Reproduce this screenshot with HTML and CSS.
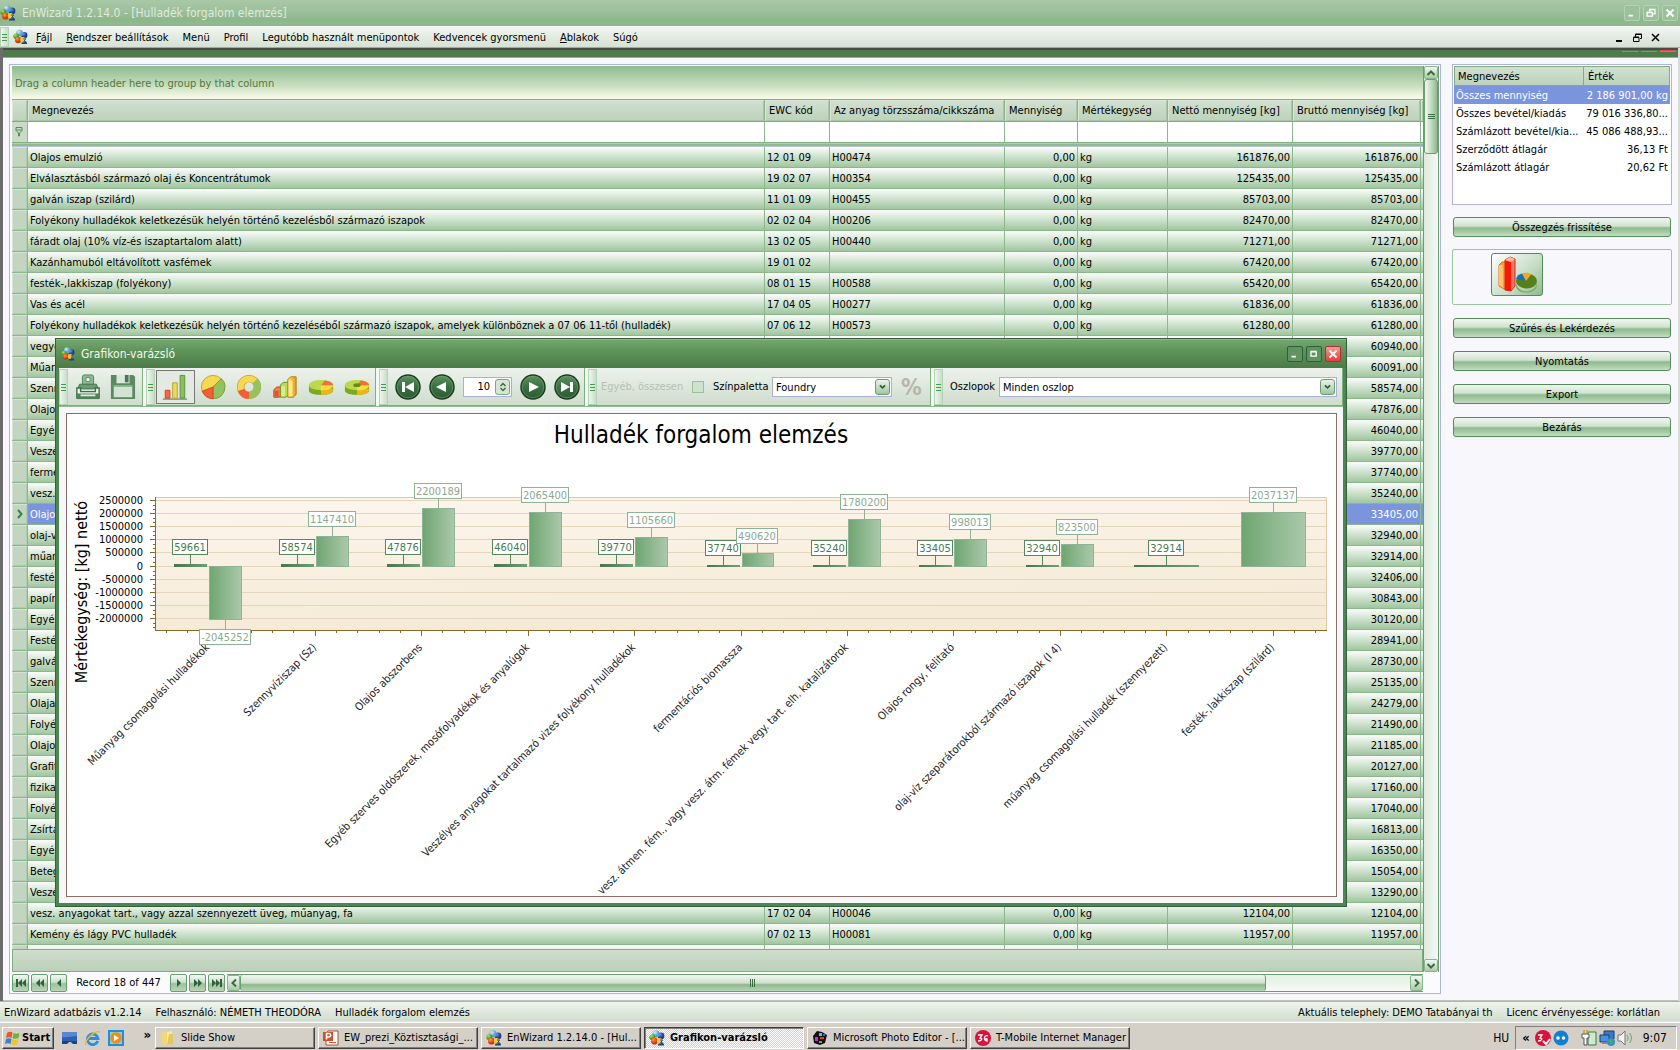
FILE: index.html
```html
<!DOCTYPE html>
<html lang="hu">
<head>
<meta charset="utf-8">
<title>EnWizard 1.2.14.0 - [Hulladék forgalom elemzés]</title>
<link rel="stylesheet" href="styles.css">
</head>
<body>
<svg class="defs" aria-hidden="true">
  <defs>
    <radialGradient id="gBlue" cx=".35" cy=".3"><stop offset="0" stop-color="#d6ecf8"/><stop offset="1" stop-color="#5b9fd0"/></radialGradient>
    <radialGradient id="gGreen" cx=".35" cy=".3"><stop offset="0" stop-color="#a6e06a"/><stop offset="1" stop-color="#4a9a1c"/></radialGradient>
    <radialGradient id="gRed" cx=".35" cy=".3"><stop offset="0" stop-color="#ff9a50"/><stop offset="1" stop-color="#d8350c"/></radialGradient>
    <radialGradient id="gNavy" cx=".35" cy=".3"><stop offset="0" stop-color="#6a94d8"/><stop offset="1" stop-color="#1c3c8c"/></radialGradient>
    <linearGradient id="gNav" x2="0" y2="1"><stop offset="0" stop-color="#5c9460"/><stop offset=".5" stop-color="#3a7040"/><stop offset="1" stop-color="#2c5a32"/></linearGradient>
    <linearGradient id="gGold" x2="1"><stop offset="0" stop-color="#f8e070"/><stop offset="1" stop-color="#e0a020"/></linearGradient>
  </defs>
  <symbol id="logo" viewBox="0 0 16 16">
    <circle cx="12" cy="6" r="3.400" fill="url(#gNavy)"/>
    <circle cx="7" cy="3.800" r="3.600" fill="url(#gBlue)"/>
    <circle cx="3.400" cy="7.200" r="3" fill="url(#gGreen)"/>
    <circle cx="5.500" cy="11.200" r="3.400" fill="url(#gRed)"/>
    <path d="M9 14.500c1-3 5-3 6 0v1H9z" fill="#1d3f8c"/>
    <circle cx="10.500" cy="10.800" r="2.800" fill="#f4cf2c"/>
    <path d="M11 10h2.500l-2 3h2.500" stroke="#2a4a90" fill="none"/>
  </symbol>
  <symbol id="navCircle" viewBox="0 0 26 26"><circle cx="13" cy="13" r="12" fill="url(#gNav)" stroke="#1c3d20" stroke-width="1.500"/><circle cx="13" cy="13" r="10.800" fill="none" stroke="#79a87c" stroke-opacity=".5"/></symbol>
</svg>

<header class="titlebar">
  <svg class="i16"><use href="#logo"/></svg>
  <h1>EnWizard 1.2.14.0 - [Hulladék forgalom elemzés]</h1>
  <div class="caption-btns">
    <button type="button" aria-label="Minimize"><svg viewBox="0 0 16 16"><path d="M4 10h5v2H4z" fill="#fff"/></svg></button>
    <button type="button" aria-label="Restore"><svg viewBox="0 0 16 16"><path d="M6.500 6V4h6v5h-2M3.500 7.500h6v4h-6zM3.500 7h6" stroke="#fff" stroke-width="1.500" fill="none"/></svg></button>
    <button type="button" aria-label="Close"><svg viewBox="0 0 16 16"><path d="M4 4l8 8M12 4l-8 8" stroke="#fff" stroke-width="2.200"/></svg></button>
  </div>
</header>

<nav class="menubar">
  <span class="grip"></span>
  <svg class="i16"><use href="#logo"/></svg>
  <ul>
    <li><a href="#"><u>F</u>ájl</a></li>
    <li><a href="#"><u>R</u>endszer beállítások</a></li>
    <li><a href="#">Menü</a></li>
    <li><a href="#">Profil</a></li>
    <li><a href="#">Legutóbb használt menüpontok</a></li>
    <li><a href="#">Kedvencek gyorsmenü</a></li>
    <li><a href="#"><u>A</u>blakok</a></li>
    <li><a href="#">Súgó</a></li>
  </ul>
  <div class="mdi-btns">
    <button type="button" aria-label="Minimize child"><svg viewBox="0 0 12 12"><path d="M2 8h6v2H2z"/></svg></button>
    <button type="button" aria-label="Restore child"><svg viewBox="0 0 12 12"><path d="M3.500 5V2h6v4.500H8M1.500 5.500h5.500v4H1.500zM1.500 5h5.500M3.500 2.500h6" stroke="#000" fill="none"/></svg></button>
    <button type="button" aria-label="Close child"><svg viewBox="0 0 12 12"><path d="M2 2l7 7M9 2l-7 7" stroke="#000" stroke-width="1.500"/></svg></button>
  </div>
</nav>

<main class="mdi">
  <div class="child-title"><i></i><i></i><i class="red"></i></div>
  <div class="child">
    <section class="grid">
      <div class="grid-main">
        <div class="grid-view">
          <div class="group-panel">Drag a column header here to group by that column</div>
          <div class="rows">
          <table>
            <colgroup><col class="c-ind"><col><col class="c-ewc"><col class="c-code"><col class="c-qty"><col class="c-unit"><col class="c-net"><col class="c-gross"><col class="c-end"></colgroup>
            <thead>
              <tr class="heads"><th></th><th>Megnevezés</th><th>EWC kód</th><th>Az anyag törzsszáma/cikkszáma</th><th>Mennyiség</th><th>Mértékegység</th><th>Nettó mennyiség [kg]</th><th>Bruttó mennyiség [kg]</th><th></th></tr>
              <tr class="filter"><td><svg viewBox="0 0 8 10"><path d="M1 .5h6v3L4.500 6v3h-1V6L1 3.500zM1 3h6" fill="none" stroke="#4f8f58"/></svg></td><td><td><td><td><td><td><td><td></tr>
              <tr class="sep"><td colspan="9"></td></tr>
            </thead>
            <tbody>
              <tr><td><td>Olajos emulzió<td>12 01 09<td>H00474<td>0,00<td>kg<td>161876,00<td>161876,00<td>
              <tr><td><td>Elválasztásból származó olaj és Koncentrátumok<td>19 02 07<td>H00354<td>0,00<td>kg<td>125435,00<td>125435,00<td>
              <tr><td><td>galván iszap (szilárd)<td>11 01 09<td>H00455<td>0,00<td>kg<td>85703,00<td>85703,00<td>
              <tr><td><td>Folyékony hulladékok keletkezésük helyén történő kezelésből származó iszapok<td>02 02 04<td>H00206<td>0,00<td>kg<td>82470,00<td>82470,00<td>
              <tr><td><td>fáradt olaj (10% víz-és iszaptartalom alatt)<td>13 02 05<td>H00440<td>0,00<td>kg<td>71271,00<td>71271,00<td>
              <tr><td><td>Kazánhamuból eltávolított vasfémek<td>19 01 02<td><td>0,00<td>kg<td>67420,00<td>67420,00<td>
              <tr><td><td>festék-,lakkiszap (folyékony)<td>08 01 15<td>H00588<td>0,00<td>kg<td>65420,00<td>65420,00<td>
              <tr><td><td>Vas és acél<td>17 04 05<td>H00277<td>0,00<td>kg<td>61836,00<td>61836,00<td>
              <tr><td><td>Folyékony hulladékok keletkezésük helyén történő kezeléséből származó iszapok, amelyek különböznek a 07 06 11-től (hulladék)<td>07 06 12<td>H00573<td>0,00<td>kg<td>61280,00<td>61280,00<td>
              <tr><td><td>vegyes<td><td><td>0,00<td>kg<td>60940,00<td>60940,00<td>
              <tr><td><td>Műanyag<td><td><td>0,00<td>kg<td>60091,00<td>60091,00<td>
              <tr><td><td>Szennyvíz<td><td><td>0,00<td>kg<td>58574,00<td>58574,00<td>
              <tr><td><td>Olajos<td><td><td>0,00<td>kg<td>47876,00<td>47876,00<td>
              <tr><td><td>Egyéb<td><td><td>0,00<td>kg<td>46040,00<td>46040,00<td>
              <tr><td><td>Veszélyes<td><td><td>0,00<td>kg<td>39770,00<td>39770,00<td>
              <tr><td><td>fermentációs<td><td><td>0,00<td>kg<td>37740,00<td>37740,00<td>
              <tr><td><td>vesz. átmen.<td><td><td>0,00<td>kg<td>35240,00<td>35240,00<td>
              <tr class="sel"><td><svg viewBox="0 0 8 10"><path d="M2 1l3.500 4L2 9" fill="none" stroke="#3f7f48" stroke-width="2"/></svg><td>Olajos<td><td><td>0,00<td>kg<td>33405,00<td>33405,00<td>
              <tr><td><td>olaj-víz<td><td><td>0,00<td>kg<td>32940,00<td>32940,00<td>
              <tr><td><td>műanyag<td><td><td>0,00<td>kg<td>32914,00<td>32914,00<td>
              <tr><td><td>festék<td><td><td>0,00<td>kg<td>32406,00<td>32406,00<td>
              <tr><td><td>papír<td><td><td>0,00<td>kg<td>30843,00<td>30843,00<td>
              <tr><td><td>Egyéb<td><td><td>0,00<td>kg<td>30120,00<td>30120,00<td>
              <tr><td><td>Festék<td><td><td>0,00<td>kg<td>28941,00<td>28941,00<td>
              <tr><td><td>galván<td><td><td>0,00<td>kg<td>28730,00<td>28730,00<td>
              <tr><td><td>Szennyvíz<td><td><td>0,00<td>kg<td>25135,00<td>25135,00<td>
              <tr><td><td>Olajat<td><td><td>0,00<td>kg<td>24279,00<td>24279,00<td>
              <tr><td><td>Folyékony<td><td><td>0,00<td>kg<td>21490,00<td>21490,00<td>
              <tr><td><td>Olajos<td><td><td>0,00<td>kg<td>21185,00<td>21185,00<td>
              <tr><td><td>Grafit<td><td><td>0,00<td>kg<td>20127,00<td>20127,00<td>
              <tr><td><td>fizikai<td><td><td>0,00<td>kg<td>17160,00<td>17160,00<td>
              <tr><td><td>Folyékony<td><td><td>0,00<td>kg<td>17040,00<td>17040,00<td>
              <tr><td><td>Zsírtalanító<td><td><td>0,00<td>kg<td>16813,00<td>16813,00<td>
              <tr><td><td>Egyéb<td><td><td>0,00<td>kg<td>16350,00<td>16350,00<td>
              <tr><td><td>Betegek<td><td><td>0,00<td>kg<td>15054,00<td>15054,00<td>
              <tr><td><td>Veszélyes<td><td><td>0,00<td>kg<td>13290,00<td>13290,00<td>
              <tr><td><td>vesz. anyagokat tart., vagy azzal szennyezett üveg, műanyag, fa<td>17 02 04<td>H00046<td>0,00<td>kg<td>12104,00<td>12104,00<td>
              <tr><td><td>Kemény és lágy PVC hulladék<td>07 02 13<td>H00081<td>0,00<td>kg<td>11957,00<td>11957,00<td>
              <tr><td><td><td><td><td><td><td><td><td>
            </tbody>
          </table>
          </div>
          <div class="grid-foot"></div>
        </div>
        <div class="vscroll">
          <button type="button" aria-label="Up"><svg viewBox="0 0 10 8"><path d="M1.500 6L5 2.500 8.500 6" fill="none" stroke="#3c6b40" stroke-width="2"/></svg></button>
          <div class="vthumb"><svg viewBox="0 0 7 6"><path d="M0 .5h7M0 2.500h7M0 4.500h7" stroke="#3c6b40"/></svg></div>
          <div class="vtrack"></div>
          <button type="button" aria-label="Down"><svg viewBox="0 0 10 8"><path d="M1.500 2L5 5.500 8.500 2" fill="none" stroke="#3c6b40" stroke-width="2"/></svg></button>
        </div>
      </div>
      <div class="navrow">
        <button type="button" aria-label="First"><svg viewBox="0 0 12 10"><path d="M1 1h2v8H1zM7 1v8L3 5zM11 1v8L7 5z"/></svg></button>
        <button type="button" aria-label="Previous page"><svg viewBox="0 0 12 10"><path d="M6 1v8L2 5zM10 1v8L6 5z"/></svg></button>
        <button type="button" aria-label="Previous"><svg viewBox="0 0 12 10"><path d="M8 1v8L4 5z"/></svg></button>
        <span class="rec">Record 18 of 447</span>
        <button type="button" aria-label="Next"><svg viewBox="0 0 12 10"><path d="M4 1v8l4-4z"/></svg></button>
        <button type="button" aria-label="Next page"><svg viewBox="0 0 12 10"><path d="M2 1v8l4-4zM6 1v8l4-4z"/></svg></button>
        <button type="button" aria-label="Last"><svg viewBox="0 0 12 10"><path d="M1 1v8l4-4zM5 1v8l4-4zM9 1h2v8H9z"/></svg></button>
        <div class="hscroll">
          <button type="button" aria-label="Left"><svg viewBox="0 0 8 10"><path d="M6 1.500L2.500 5 6 8.500" fill="none" stroke="#3c6b40" stroke-width="2"/></svg></button>
          <div class="hthumb"><svg viewBox="0 0 6 8"><path d="M.5 0v8M2.500 0v8M4.500 0v8" stroke="#3c6b40"/></svg></div>
          <div class="htrack"></div>
          <button type="button" aria-label="Right"><svg viewBox="0 0 8 10"><path d="M2 1.500L5.500 5 2 8.500" fill="none" stroke="#3c6b40" stroke-width="2"/></svg></button>
        </div>
      </div>
    </section>

    <aside class="side">
      <div class="sumbox">
        <table>
          <thead><tr><th>Megnevezés</th><th>Érték</th></tr></thead>
          <tbody>
            <tr class="on"><td>Összes mennyiség</td><td>2 186 901,00 kg</td></tr>
            <tr><td>Összes bevétel/kiadás</td><td>79 016 336,80...</td></tr>
            <tr><td>Számlázott bevétel/kia...</td><td>45 086 488,93...</td></tr>
            <tr><td>Szerződött átlagár</td><td>36,13 Ft</td></tr>
            <tr><td>Számlázott átlagár</td><td>20,62 Ft</td></tr>
          </tbody>
        </table>
      </div>
      <button type="button" class="gbtn">Összegzés frissítése</button>
      <div class="chartbox">
        <button type="button" aria-label="Grafikon">
          <svg viewBox="0 0 42 37">
            <path d="M3 9l3-3h6v24l-4 3-5-3z" fill="#ff9a30" stroke="#e07010"/><path d="M3 9h4v23l-4-3z" fill="#ffc070"/>
            <path d="M9 4l5-3 5 2v27l-4 5-6-1z" fill="#ff7860" stroke="#c83018"/><path d="M9 4l6 2v29l-6-1z" fill="#f81808"/><path d="M9 4l5-3 5 2-4 3z" fill="#ffb8a0"/>
            <path d="M20 25c0 14 21 14 21 0v4c0 10-21 10-21 1z" fill="#7fa860"/>
            <ellipse cx="30.500" cy="25" rx="10.500" ry="7.500" fill="#56801c"/>
            <path d="M30 25l-10-2c1-3 3-5 6-5.500z" fill="#1672b0"/><path d="M30 25l-4-7.500c3-1 7-1 9 1z" fill="#f0a828"/>
          </svg>
        </button>
      </div>
      <div class="gstack">
        <button type="button" class="gbtn">Szűrés és Lekérdezés</button>
        <button type="button" class="gbtn">Nyomtatás</button>
        <button type="button" class="gbtn">Export</button>
        <button type="button" class="gbtn">Bezárás</button>
      </div>
    </aside>
  </div>
</main>

<section class="dialog" role="dialog" aria-label="Grafikon-varázsló">
  <div class="dlg-title">
    <svg class="i16"><use href="#logo"/></svg>
    <h2>Grafikon-varázsló</h2>
    <div class="caption-btns dlg-btns">
      <button type="button" aria-label="Minimize"><svg viewBox="0 0 16 16"><path d="M4 10h5v2H4z" fill="#fff"/></svg></button>
      <button type="button" aria-label="Maximize"><svg viewBox="0 0 16 16"><path d="M4.500 5.500h6v5h-6zM4 5h7" stroke="#fff" stroke-width="1.500" fill="none"/></svg></button>
      <button type="button" aria-label="Close" class="close"><svg viewBox="0 0 16 16"><path d="M4 4l8 8M12 4l-8 8" stroke="#fff" stroke-width="2.200"/></svg></button>
    </div>
  </div>
  <div class="dlg-body">
  <div class="toolbar">
    <div class="bar b1"><span class="grip"></span>
      <button type="button" aria-label="Nyomtatás"><svg viewBox="0 0 28 28">
        <rect x="8" y="1" width="12" height="14" rx="2" fill="#8fb894" stroke="#4f8258"/><circle cx="14" cy="6" r="2.500" fill="#e8f0e8" stroke="#4f8258"/>
        <path d="M5 11h18l2 5H3z" fill="#6a9a70" stroke="#3f6f48"/><path d="M2 15h4v4h16v-4h4v11H2z" fill="#f2f7f2" stroke="#3f6f48" stroke-width="1.500"/><path d="M2 21h24v6H2z" fill="#4f8258"/><path d="M6 23h16" stroke="#dfeadf" stroke-width="2"/></svg></button>
      <button type="button" aria-label="Mentés"><svg viewBox="0 0 28 28">
        <path d="M1 1h24l2 2v24H1z" fill="#5a8a60"/><path d="M7 1h14v9H7z" fill="#dce8dc"/><path d="M16 1h4v8h-4z" fill="#4a7850"/><path d="M4 13h20v12H4z" fill="#d3e2d3"/><path d="M4 13h20" stroke="#8fb894" stroke-width="2"/></svg></button>
    </div>
    <div class="bar b2"><span class="grip"></span>
      <button type="button" class="on" aria-label="Oszlop"><svg viewBox="0 0 28 28"><path d="M1 27h26" stroke="#555"/><path d="M3.500 17.500h5V26h-5z" fill="#f06a40" stroke="#d04020"/><path d="M11.500 9.500h5V26h-5z" fill="#ecd95c" stroke="#b8a030"/><path d="M19.500 1.500h5V26h-5z" fill="#8cbf5c" stroke="#5a9040"/></svg></button>
      <button type="button" aria-label="Kör"><svg viewBox="0 0 28 28"><circle cx="14" cy="14" r="12.500" fill="#f4da52" stroke="#d0982c"/><path d="M14 14l9-9a12.500 12.500 0 0 1-9 21.500z" fill="#94c25c" stroke="#6fa040"/><path d="M14 14v12.500A12.500 12.500 0 0 1 2.500 18.500z" fill="#f06038" stroke="#d04828"/></svg></button>
      <button type="button" aria-label="Gyűrű"><svg viewBox="0 0 28 28"><circle cx="14" cy="14" r="9" fill="none" stroke="#d0982c" stroke-width="8"/><circle cx="14" cy="14" r="9" fill="none" stroke="#f4da52" stroke-width="6.500"/><path d="M20.400 7.600A9 9 0 0 1 14 23" fill="none" stroke="#94c25c" stroke-width="7.500"/><path d="M14 23a9 9 0 0 1-8.500-6" fill="none" stroke="#f06038" stroke-width="7.500"/></svg></button>
      <button type="button" aria-label="3D oszlop"><svg viewBox="0 0 28 28"><path d="M2 17l3-3h6v8l-3 3H2z" fill="#f08050" stroke="#b84018"/><path d="M9 12l3-3h6v13l-3 3H9z" fill="#b8dc50" stroke="#689020"/><path d="M17 6l3-3h6v19l-3 3h-6z" fill="url(#gGold)" stroke="#b07810"/><path d="M3 18h4v6H3z" fill="#e85028"/><path d="M10 13h4v11h-4z" fill="#d8ec90"/><path d="M18 7h4v17h-4z" fill="#fbe890"/></svg></button>
      <button type="button" aria-label="3D kör"><svg viewBox="0 0 28 28"><path d="M1 12v6c0 6 26 6 26 0v-6z" fill="#7fa81c"/><path d="M14 16h13v2c0 3-7 4.500-13 4.500z" fill="#e8b818"/><ellipse cx="14" cy="12" rx="13" ry="5.500" fill="#bcd84c"/><path d="M14 12h13c0 4-7 5.500-13 5.500z" fill="#f8dc40"/><path d="M14 12l4-5c5 .5 9 2.500 9 5z" fill="#f07038"/></svg></button>
      <button type="button" aria-label="3D gyűrű"><svg viewBox="0 0 28 28"><path d="M1 12v6c0 6 26 6 26 0v-6z" fill="#7fa81c"/><path d="M14 16h13v2c0 3-7 4.500-13 4.500z" fill="#e8b818"/><ellipse cx="14" cy="12" rx="13" ry="5.500" fill="#bcd84c"/><path d="M14 12h13c0 4-7 5.500-13 5.500z" fill="#f8dc40"/><path d="M14 12l4-5c5 .5 9 2.500 9 5z" fill="#f07038"/><ellipse cx="14" cy="12" rx="4" ry="2" fill="#6a8a1c"/></svg></button>
    </div>
    <div class="bar b3"><span class="grip"></span>
      <button type="button" aria-label="Első"><svg viewBox="0 0 26 26"><use href="#navCircle"/><path d="M7 8h3v10H7zM19 8v10l-9-5z" fill="#fff"/></svg></button>
      <button type="button" aria-label="Előző"><svg viewBox="0 0 26 26"><use href="#navCircle"/><path d="M17 8v10l-10-5z" fill="#fff"/></svg></button>
      <label class="spin"><input type="text" value="10" aria-label="Darab"><span><svg viewBox="0 0 8 10"><path d="M1.500 4L4 1.500 6.500 4M1.500 6L4 8.500 6.500 6" fill="none" stroke="#3c6b40" stroke-width="1.500"/></svg></span></label>
      <button type="button" aria-label="Következő"><svg viewBox="0 0 26 26"><use href="#navCircle"/><path d="M9 8v10l10-5z" fill="#fff"/></svg></button>
      <button type="button" aria-label="Utolsó"><svg viewBox="0 0 26 26"><use href="#navCircle"/><path d="M16 8h3v10h-3zM7 8v10l9-5z" fill="#fff"/></svg></button>
    </div>
    <div class="bar b4"><span class="grip"></span>
      <label class="dim" for="other">Egyéb, összesen</label><input type="checkbox" id="other" disabled>
      <label for="pal">Színpaletta</label>
      <span class="combo pal"><select id="pal"><option>Foundry</option></select><svg viewBox="0 0 15 16"><path d="M4.500 6L7.500 9l3-3" fill="none" stroke="#2f5f38" stroke-width="2"/></svg></span>
      <span class="pct">%</span>
    </div>
    <div class="bar b5"><span class="grip"></span>
      <label for="cols">Oszlopok</label>
      <span class="combo cols"><select id="cols"><option>Minden oszlop</option></select><svg viewBox="0 0 15 16"><path d="M4.500 6L7.500 9l3-3" fill="none" stroke="#2f5f38" stroke-width="2"/></svg></span>
    </div>
  </div>
  <div class="chart">
    <svg viewBox="67 414 1269 482" role="img" aria-label="Hulladék forgalom elemzés">
      <defs>
        <linearGradient id="plot" x2=".3" y2="1"><stop offset="0" stop-color="#fdf6ee"/><stop offset="1" stop-color="#f5ead6"/></linearGradient>
        <linearGradient id="lt" x2="1"><stop offset="0" stop-color="#6fa571"/><stop offset="1" stop-color="#abc9ab"/></linearGradient>
        <linearGradient id="dk" x2="1"><stop offset="0" stop-color="#4a7350"/><stop offset="1" stop-color="#6f9f74"/></linearGradient>
      </defs>
      <text class="ctitle" x="701" y="443">Hulladék forgalom elemzés</text>
      <text class="atitle" transform="translate(87 592) rotate(-90)">Mértékegység: [kg] nettó</text>
      <rect x="155" y="497" width="1172" height="133" fill="url(#plot)"/>
      <path class="gl" d="M155 500.500h1172M155 513.500h1172M155 526.500h1172M155 539.500h1172M155 552.500h1172M155 566.500h1172M155 579.500h1172M155 592.500h1172M155 605.500h1172M155 618.500h1172"/>
      <path d="M155 497.500H1326.500V630" fill="none" stroke="#dac9a6"/>
      <path class="ax" d="M155.500 497v134M155 630.500h1172M150 500.500h5M150 513.500h5M150 526.500h5M150 539.500h5M150 552.500h5M150 566.500h5M150 579.500h5M150 592.500h5M150 605.500h5M150 618.500h5"/>
      <path class="ax" d="M153 505.500h2M153 509.500h2M153 518.500h2M153 522.500h2M153 531.500h2M153 535.500h2M153 544.500h2M153 548.500h2M153 557.500h2M153 562.500h2M153 571.500h2M153 575.500h2M153 584.500h2M153 588.500h2M153 597.500h2M153 601.500h2M153 610.500h2M153 614.500h2M153 623.500h2M153 627.500h2"/>
      <path class="ax" d="M208.500 630v6M315.500 630v6M421.500 630v6M528.500 630v6M634.500 630v6M741.500 630v6M847.500 630v6M953.500 630v6M1060.500 630v6M1166.500 630v6M1273.500 630v6"/>
      <path class="ax" d="M166.500 630v3M187.500 630v3M229.500 630v3M251.500 630v3M272.500 630v3M293.500 630v3M336.500 630v3M357.500 630v3M379.500 630v3M400.500 630v3M442.500 630v3M464.500 630v3M485.500 630v3M506.500 630v3M549.500 630v3M570.500 630v3M592.500 630v3M613.500 630v3M655.500 630v3M677.500 630v3M698.500 630v3M719.500 630v3M762.500 630v3M783.500 630v3M804.500 630v3M826.500 630v3M868.500 630v3M890.500 630v3M911.500 630v3M932.500 630v3M975.500 630v3M996.500 630v3M1017.500 630v3M1039.500 630v3M1081.500 630v3M1103.500 630v3M1124.500 630v3M1145.500 630v3M1188.500 630v3M1209.500 630v3M1230.500 630v3M1252.500 630v3M1294.500 630v3M1315.500 630v3"/>
      <g class="yl"><text x="143" y="504">2500000</text><text x="143" y="517">2000000</text><text x="143" y="530">1500000</text><text x="143" y="543">1000000</text><text x="143" y="556">500000</text><text x="143" y="570">0</text><text x="143" y="583">-500000</text><text x="143" y="596">-1000000</text><text x="143" y="609">-1500000</text><text x="143" y="622">-2000000</text></g>
      <g fill="url(#dk)"><rect x="174" y="564" width="33" height="3"/><rect x="281" y="564" width="33" height="3"/><rect x="387" y="564" width="33" height="3"/><rect x="494" y="564" width="33" height="3"/><rect x="600" y="564" width="33" height="3"/><rect x="707" y="565" width="33" height="2"/><rect x="813" y="565" width="33" height="2"/><rect x="919" y="565" width="33" height="2"/><rect x="1026" y="565" width="33" height="2"/><rect x="1134" y="565" width="65" height="2"/></g>
      <g fill="url(#lt)" stroke="#8fb396"><rect x="209.500" y="566.500" width="32" height="53"/><rect x="316.500" y="536.500" width="32" height="30"/><rect x="422.500" y="508.500" width="32" height="58"/><rect x="529.500" y="512.500" width="32" height="54"/><rect x="635.500" y="537.500" width="32" height="29"/><rect x="742.500" y="553.500" width="31" height="13"/><rect x="848.500" y="519.500" width="32" height="47"/><rect x="954.500" y="539.500" width="32" height="27"/><rect x="1061.500" y="544.500" width="32" height="22"/><rect x="1241.500" y="512.500" width="64" height="54"/></g>
      <g class="xl">
        <text transform="translate(210 648) rotate(-45)">Műanyag csomagolási hulladékok</text>
        <text transform="translate(317 648) rotate(-45)">Szennyvíziszap (Sz)</text>
        <text transform="translate(423 648) rotate(-45)">Olajos abszorbens</text>
        <text transform="translate(530 648) rotate(-45)">Egyéb szerves oldószerek, mosófolyadékok és anyalúgok</text>
        <text transform="translate(636 648) rotate(-45)">Veszélyes anyagokat tartalmazó vizes folyékony hulladékok</text>
        <text transform="translate(743 648) rotate(-45)">fermentációs biomassza</text>
        <text transform="translate(849 648) rotate(-45)">vesz. átmen. fém., vagy vesz. átm. fémek vegy. tart. elh. katalizátorok</text>
        <text transform="translate(955 648) rotate(-45)">Olajos rongy, felitató</text>
        <text transform="translate(1062 648) rotate(-45)">olaj-víz szeparátorokból származó iszapok (I 4)</text>
        <text transform="translate(1168 648) rotate(-45)">műanyag csomagolási hulladék (szennyezett)</text>
        <text transform="translate(1275 648) rotate(-45)">festék-,lakkiszap (szilárd)</text>
      </g>
      <g class="vl d">
        <path d="M190.500 555v9M297.500 555v9M403.500 555v9M510.500 555v9M616.500 555v9M723.500 556v9M829.500 556v9M935.500 556v9M1042.500 556v9M1166.500 556v9"/>
        <rect x="172.500" y="539.500" width="35" height="15"/><text x="190" y="551">59661</text>
        <rect x="279.500" y="539.500" width="35" height="15"/><text x="297" y="551">58574</text>
        <rect x="385.500" y="539.500" width="35" height="15"/><text x="403" y="551">47876</text>
        <rect x="492.500" y="539.500" width="35" height="15"/><text x="510" y="551">46040</text>
        <rect x="598.500" y="539.500" width="35" height="15"/><text x="616" y="551">39770</text>
        <rect x="705.500" y="540.500" width="35" height="15"/><text x="723" y="552">37740</text>
        <rect x="811.500" y="540.500" width="35" height="15"/><text x="829" y="552">35240</text>
        <rect x="917.500" y="540.500" width="35" height="15"/><text x="935" y="552">33405</text>
        <rect x="1024.500" y="540.500" width="35" height="15"/><text x="1042" y="552">32940</text>
        <rect x="1148.500" y="540.500" width="35" height="15"/><text x="1166" y="552">32914</text>
      </g>
      <g class="vl l">
        <path d="M225.500 620v9M332.500 527v9M438.500 499v9M545.500 503v9M651.500 528v9M757.500 544v9M864.500 510v9M970.500 530v9M1077.500 535v9M1273.500 503v9"/>
        <rect x="199.500" y="629.500" width="51" height="15"/><text x="225" y="641">-2045252</text>
        <rect x="308.500" y="511.500" width="47" height="15"/><text x="332" y="523">1147410</text>
        <rect x="414.500" y="483.500" width="47" height="15"/><text x="438" y="495">2200189</text>
        <rect x="521.500" y="487.500" width="47" height="15"/><text x="545" y="499">2065400</text>
        <rect x="627.500" y="512.500" width="47" height="15"/><text x="651" y="524">1105660</text>
        <rect x="736.500" y="528.500" width="41" height="15"/><text x="757" y="540">490620</text>
        <rect x="840.500" y="494.500" width="47" height="15"/><text x="864" y="506">1780200</text>
        <rect x="949.500" y="514.500" width="41" height="15"/><text x="970" y="526">998013</text>
        <rect x="1056.500" y="519.500" width="41" height="15"/><text x="1077" y="531">823500</text>
        <rect x="1249.500" y="487.500" width="47" height="15"/><text x="1273" y="499">2037137</text>
      </g>
    </svg>
  </div>
  </div>
</section>

<div class="statusbar"><span>EnWizard adatbázis v1.2.14</span><span>Felhasználó: NÉMETH THEODÓRA</span><span>Hulladék forgalom elemzés</span><span class="push">Aktuális telephely: DEMO Tatabányai th</span><span>Licenc érvényessége: korlátlan</span></div>

<footer class="taskbar">
  <button type="button" class="start"><svg viewBox="0 0 16 16"><path d="M2 3c2-1.500 4-1.500 5.500-.5L6.500 8C5 7 3 7 1 8z" fill="#e8562a"/><path d="M8.500 3c2 1 4 1 6 0l-1 5c-2 1-4 1-6 .2z" fill="#6db33a"/><path d="M1 9c2-1 4-1 5.500 0l-1 5C4 13 2 13 0 14z" fill="#3a80d8"/><path d="M7.300 9.300c2 1 4 1 6 0l-1 5c-2 1-4 1-6 0z" fill="#f4c22c"/></svg>Start</button>
  <div class="quick">
    <a href="#" aria-label="Asztal"><svg viewBox="0 0 16 16"><path d="M0 2h15v10H0z" fill="#2b62b8"/><path d="M0 2h15v4c-6 0-9 2-15 1z" fill="#5a88cc"/><path d="M0 11h15v3H0z" fill="#23407a"/><path d="M5 14l2-2h2l2 2z" fill="#c8c8a8"/></svg></a>
    <a href="#" aria-label="Internet Explorer"><svg viewBox="0 0 16 16"><path d="M12.800 11A5.300 5.300 0 1 1 13 8.500H4" fill="none" stroke="#2a8fe0" stroke-width="2.800"/><path d="M1 15C-1 11 9 0 15 2" fill="none" stroke="#f0b828" stroke-width="1.500"/></svg></a>
    <a href="#" aria-label="Media Player"><svg viewBox="0 0 16 16"><path d="M0 0h16v16H0z" fill="#1a8fe8"/><path d="M2 2h12v12H2z" fill="#8fd0c0"/><circle cx="8" cy="8" r="5.800" fill="#f58a18"/><path d="M6 5l5 3-5 3z" fill="#fff"/></svg></a>
    <span class="more">»</span>
  </div>
  <div class="tasks">
    <button type="button"><svg viewBox="0 0 16 16"><path d="M2 2l5-1v13l-5 1z" fill="#f0d878"/><path d="M7 2l5-1v12l-5 1z" fill="#f8e9a0"/><path d="M9 4h4v10l-6 1z" fill="#e6c85c"/></svg><span>Slide Show</span></button>
    <button type="button"><svg viewBox="0 0 16 16"><path d="M5 1h10v14H3V4z" fill="#fff" stroke="#a05038"/><path d="M0 2h10v9H0z" fill="#d0502c"/><path d="M3.500 9.500v-6h2.500a1.500 1.500 0 0 1 0 3.500H3.500" fill="none" stroke="#fff" stroke-width="1.500"/><path d="M6 12.500h7" stroke="#d0502c"/></svg><span>EW_prezi_Köztisztasági_...</span></button>
    <button type="button"><svg viewBox="0 0 16 16"><use href="#logo"/></svg><span>EnWizard 1.2.14.0 - [Hul...</span></button>
    <button type="button" class="active"><svg viewBox="0 0 16 16"><use href="#logo"/></svg><span>Grafikon-varázsló</span></button>
    <button type="button"><svg viewBox="0 0 16 16"><path d="M5 1l5 1 5 3-2 8-5 2-6-2-1-7z" fill="#111"/><path d="M7 3h3v3H7z" fill="#3cf"/><path d="M3 7h3v4H3z" fill="#d2d"/><path d="M8 7h4v2H8z" fill="#e33"/><path d="M7 11h3v2H7z" fill="#3c3"/><path d="M11 4h2v2h-2z" fill="#36f"/></svg><span>Microsoft Photo Editor - [...</span></button>
    <button type="button"><svg viewBox="0 0 16 16"><circle cx="8" cy="8" r="8" fill="#d8123a"/><path d="M3 5h4L5 8c3 0 2 3-2 3M13 6c-4-2-5 5-1 5V9h-2" fill="none" stroke="#fff" stroke-width="1.300"/></svg><span>T-Mobile Internet Manager</span></button>
  </div>
  <span class="lang">HU</span>
  <div class="tray"><span class="more">«</span>
    <svg viewBox="0 0 16 16"><circle cx="8" cy="8" r="8" fill="#d8123a"/><path d="M3 5h4L5 8c3 0 2 3-2 3" fill="none" stroke="#fff" stroke-width="1.300"/><path d="M8 11l3 3 4-5" fill="none" stroke="#fff" stroke-width="2"/></svg>
    <svg viewBox="0 0 16 16"><circle cx="8" cy="8" r="7.500" fill="#1080d0"/><circle cx="5" cy="8" r="1.800" fill="#fff"/><circle cx="10.500" cy="8" r="1.800" fill="#fff"/></svg>
    <svg class="gap" viewBox="0 0 16 16"><path d="M7 2h8v13H7z" fill="#cfe8cf" stroke="#3a7a50"/><path d="M1 4h7v4H6v7H3V8H1z" fill="#fff" stroke="#555"/><path d="M3 0v3M6 0v3" stroke="#c8a020" stroke-width="1.500"/></svg>
    <svg viewBox="0 0 16 16"><path d="M5 1h10v8H5z" fill="#3a78d0" stroke="#223a60"/><path d="M1 5h9v7H1z" fill="#4a90e0" stroke="#223a60"/><path d="M3 13h5v1H3z" fill="#888"/><circle cx="12" cy="12" r="4" fill="#2f8fd8"/><path d="M10 10l3-1 1 3-2 3z" fill="#4cb050"/></svg>
    <svg viewBox="0 0 16 16"><path d="M1 5h3l4-4v14l-4-4H1z" fill="#f2f2f2" stroke="#777"/><path d="M10 5c1.500 2 1.500 4 0 6M12.500 3c2.500 3 2.500 7 0 10" fill="none" stroke="#5aa868"/></svg>
    <time>9:07</time></div>
</footer>
</body>
</html>
```
FILE: styles.css
```css
*{box-sizing:border-box}
html,body{height:100%}
body{margin:0;display:flex;flex-direction:column;overflow:hidden;font:11px/14px "DejaVu Sans Condensed","DejaVu Sans",sans-serif;color:#000;background:#f8f8fc}
button,input,select{font:inherit;color:inherit;margin:0;padding:0}
h1,h2,ul{margin:0;padding:0;font:inherit}
a{color:inherit;text-decoration:none}
svg{display:block}
.defs{position:absolute;width:0;height:0}
.i16{width:16px;height:16px;flex:none}

.titlebar{height:26px;flex:none;display:flex;align-items:center;gap:6px;padding:1px 2px 0 0;background:linear-gradient(#a9c8a7,#9dc09b 45%,#8db68b 80%,#93bb91);border-bottom:1px solid #8bb48c}
.titlebar h1{font-size:12px;color:#dfe9dd;flex:1}
.caption-btns{display:flex;gap:3px}
.caption-btns button{width:16px;height:16px;border:1px solid #b6d2b4;border-radius:2px;background:#9cc09a}
.caption-btns svg{width:14px;height:14px}

.menubar{height:22px;flex:none;display:flex;align-items:center;border-top:1px solid #fff;border-bottom:1px solid #8fb78f;background:linear-gradient(#f0f5f0,#d6e2d3)}
.grip{flex:none;align-self:stretch;width:9px;background:linear-gradient(90deg,#eef5ee,#c9dcc9);border:1px solid #b5d2b5;position:relative}
.grip::after{content:"";position:absolute;left:1px;top:calc(50% - 3px);width:5px;height:7px;background:repeating-linear-gradient(#3fa04b 0 1px,transparent 1px 3px)}
.menubar .i16{margin:0 8px 0 4px;width:15px}
.menubar ul{display:flex;gap:14px;list-style:none;flex:1;padding-top:1px}
.mdi-btns{display:flex;gap:6px;padding:1px 18px 0 0}
.mdi-btns button{width:12px;height:12px;border:0;background:none}

.mdi{flex:1;min-height:0;display:flex;flex-direction:column;border:solid #d8dcd4;border-width:0 2px 0 3px;border-left-color:#6c6c6c;background:#f8f8fc}
.child-title{height:10px;flex:none;display:flex;justify-content:flex-end;gap:3px;padding-right:2px;background:#4f7b4b;border-top:2px solid #4a4a50;border-bottom:1px solid #8fb38c}
.child-title i{width:16px;height:2px;border-bottom:1px solid #6f9f6c}
.child-title .red{background:#e84a40}
.child{flex:1;min-height:0;display:flex;gap:11px;padding:6px;border-bottom:1px solid #bcc4b8}

.grid{flex:1;min-width:0;display:flex;flex-direction:column;border:1px solid #b0b4d8;padding:1px;background:#fbfbfd}
.grid-main{flex:1;min-height:0;display:flex}
.grid-view{flex:1;min-width:0;display:flex;flex-direction:column;padding-left:1px}
.group-panel{height:33px;flex:none;padding:11px 3px 8px;color:#587540;background:linear-gradient(#8fbb8f,#c8dfbf 60%,#fbfdeb)}
.rows{flex:1;min-height:0;overflow:hidden}
table{border-collapse:separate;border-spacing:0;table-layout:fixed;width:100%}
.c-ind{width:16px}.c-ewc{width:65px}.c-code{width:175px}.c-qty{width:73px}.c-unit{width:90px}.c-net{width:125px}.c-gross{width:128px}.c-end{width:2px}
th,td{padding:2px 2px 0;white-space:nowrap;overflow:hidden;font-weight:400;text-align:left}
.rows td,.rows th{border-right:1px solid #8cb78c}
.rows th:last-child,.rows td:last-child{border-right:0;padding:0}
.heads th{height:23px;padding:1px 4px 0;background:linear-gradient(#d2e0d1,#bdd2bb);border-top:1px solid #7fae80;border-bottom:1px solid #7fae80;box-shadow:inset 1px 1px #d9e6d8,inset -1px -1px #a9c6a8}
.filter td{height:21px;background:#fff;border-bottom:1px solid #7fae80}
.filter td:first-child{background:#c9dbc8;padding:0 3px}
.filter svg,.sel svg{width:8px;height:10px}
.sep td{height:4px;padding:0;background:#8fbb8f;border-top:1px solid #b9c3d8;border-bottom:1px solid #b9c3d8}
tbody td{height:21px}
.rows tbody td{background:linear-gradient(#fbfdfb,#a0c69f);border-bottom:1px solid #8cb78c}
.rows tbody td:first-child{background:#c2d5c1;padding:0 4px;box-shadow:inset 1px 1px #d5e3d4,inset -1px -1px #b0cbaf}
.rows tbody td:nth-child(5),.rows tbody td:nth-child(7),.rows tbody td:nth-child(8){text-align:right}
.rows .sel td:nth-child(n+2){background:#7b94de;color:#fff}
.grid-foot{height:23px;flex:none;border:1px solid #7fae80;background:linear-gradient(#cfdecd,#bbd0b9)}

.vscroll{width:16px;flex:none;display:flex;flex-direction:column;border:solid #6a9e70;border-width:0 1px;background:linear-gradient(90deg,#dcebdc,#f3f8f3)}
.vscroll button,.hscroll button{border:1px solid #8ab58c;border-radius:2px;background:linear-gradient(#f2f8f2,#a8cba8);display:grid;place-items:center}
.vscroll button{height:13px}
.vscroll button svg{width:10px;height:8px}
.vthumb{height:75px;border:1px solid #6a9e70;border-radius:3px;background:linear-gradient(90deg,#f4f9f4,#b9d5b9 60%,#8fb98f);display:grid;place-items:center}
.vthumb svg{width:7px;height:6px}
.vtrack{flex:1}

.navrow{height:20px;flex:none;display:flex;align-items:center;gap:2px;padding:1px 16px 0 1px}
.navrow>button{width:17px;height:18px;border:1px solid #6a9e70;border-radius:2px;background:linear-gradient(#f2f8f2,#cde0cd 45%,#9ac29a 55%,#b8d5b8);fill:#2f6238;display:grid;place-items:center}
.navrow>button svg{width:12px;height:10px}
.rec{width:99px;text-align:center}
.hscroll{flex:1;height:18px;display:flex;border:1px solid #6a9e70;border-width:1px 0;background:linear-gradient(#e2efe2,#f6faf6)}
.hscroll button{width:13px}
.hscroll button svg{width:8px;height:10px}
.hthumb{flex:1026;border:solid #6a9e70;border-width:0 1px;border-radius:3px;background:linear-gradient(#f2f8f2,#cfe1cf 50%,#8fba8f 60%,#b5d3b5);display:grid;place-items:center}
.hthumb svg{width:6px;height:8px}
.htrack{flex:144}

.side{width:220px;flex:none}
.sumbox{height:141px;border:1px solid #b0b4d8;padding:1px;background:#fff}
.sumbox th{height:20px;padding:1px 4px 0;background:linear-gradient(#d2e0d1,#bdd2bb);border:1px solid #7fae80;border-left-width:0}
.sumbox th:first-child{width:130px;border-left-width:1px;padding-left:3px}
.sumbox td{height:18px}
.sumbox td:last-child{text-align:right}
.sumbox .on td{background:#7b94de;color:#fff}
.gbtn{display:block;width:218px;height:20px;margin-left:1px;border:1px solid #558a5a;border-radius:3px;padding-top:1px;background:linear-gradient(#f1f7f1,#cfe2cf 45%,#8fba8f 55%,#a9cca9 80%,#c5dec5)}
.sumbox+.gbtn{margin-top:12px}
.chartbox{height:56px;margin:12px 0 13px;border:1px solid #9fc4a0;border-radius:2px;padding:3px 0 0 38px}
.chartbox button{width:52px;height:43px;border:1px solid #558a5a;border-radius:3px;background:linear-gradient(135deg,#fff,#c5dcc5 60%,#8fba8f);padding:2px 4px}
.chartbox svg{width:42px;height:37px}
.gstack{display:grid;gap:13px}

.dialog{position:absolute;left:55px;right:333px;top:338px;height:569px;display:flex;flex-direction:column;padding:0 3px 3px;border:1px solid #33603a;background:#4f8552}
.dlg-title{height:29px;flex:none;display:flex;align-items:center;gap:6px;padding:0 2px;background:linear-gradient(#8fbb8b 0 1px,#72a66e 1px,#5e945a 40%,#4c7a48);margin:0 -3px}
.dlg-title .i16{width:14px;height:14px;margin-left:3px}
.dlg-title h2{flex:1;font-size:12px;color:#f4f8f2}
.dlg-btns button{background:#5f9460;border-color:#2f5f35}
.dlg-btns .close{background:linear-gradient(#f59a98,#e0403c);border-color:#b03030}
.dlg-btns{padding-right:3px}
.dlg-body{flex:1;min-height:0;display:flex;flex-direction:column;background:#f6f7f8}
.toolbar{height:39px;flex:none;display:flex;gap:3px;background:#f4f8f4;border-bottom:1px solid #8fba8f}
.bar{display:flex;align-items:center;padding-top:1px;background:linear-gradient(#edf2ec,#cfddcd);border-right:1px solid #7fb07f;border-bottom:1px solid #7fb07f}
.bar>button{border:0;background:none}
.bar>button svg{width:26px;height:28px}
.b1{width:84px}.b1>button{margin-left:7px;width:28px}.b1>button+button{margin-left:7px}
.b2{width:230px}.b2>button{width:36px;padding-left:5px;height:34px}
.b2>.on{width:39px;border:1px solid #777;background:#e3eae2;margin-left:1px}
.b3{width:206px;gap:8px}.b3>.grip{margin-right:-1px}
.b3>button svg{width:26px;height:26px}
.spin{display:flex;width:49px;height:20px;border:1px solid #aab0d8;background:#fff}
.spin input{width:26px;border:0;text-align:right;background:none}
.spin span{width:15px;margin:1px 1px 1px 5px;border:1px solid #7aa97c;border-radius:3px;background:#d5e6d5;display:grid;place-items:center}
.spin svg{width:8px;height:10px}
.b4{width:343px}.b4 .dim{color:#b6c0b4;margin-left:4px;width:91px}
.b4 label+input+label{margin-left:9px;width:59px}
.b4 input{appearance:none;width:12px;height:12px;border:1px solid #9cc09c;background:#cfe2cf}
.combo{position:relative;height:20px;border:1px solid #aab0d8;background:#fff}
.combo select{appearance:none;width:100%;height:18px;border:0;background:none;padding:1px 0 0 3px}
.combo svg{position:absolute;right:1px;top:1px;width:15px;height:16px;border:1px solid #6a9e70;border-radius:3px;background:linear-gradient(#eaf3ea,#9fc69f);pointer-events:none}
.pal{width:120px}
.pct{margin-left:9px;font-size:23px;font-weight:700;color:#b8b6ab}
.b5{flex:1;padding-right:5px}.b5 label{margin:0 4px 0 7px}
.cols{flex:1}
.chart{flex:1;min-height:0;margin:6px 6px 6px 7px;border:1px solid #8a7068;background:#fff}
.chart svg{width:100%;height:100%}
.ctitle{font-size:24px;text-anchor:middle}
.atitle{font-size:16px;text-anchor:middle}
.gl{stroke:#e3d6bd;fill:none}
.ax{stroke:#8a6a28;fill:none}
.yl,.xl{text-anchor:end}
.xl{fill:#222}
.vl{text-anchor:middle}
.vl rect{fill:#fff}
.d rect,.d path{stroke:#57855e}.d text{fill:#4a7a52}
.l rect,.l path{stroke:#8fb196}.l text{fill:#8aab90}

.statusbar{height:21px;flex:none;display:flex;align-items:center;gap:14px;padding:2px 20px 0 4px;border-top:1px solid #9fc09f;border-bottom:1px solid #e8e4dc;background:linear-gradient(#f0f4ee,#d0dccd)}
.push{margin-left:auto}
.taskbar{height:28px;flex:none;display:flex;align-items:center;padding:2px 3px 0 2px;background:#d4d0c8;border-top:1px solid #fff}
.start,.tasks button{height:22px;border:1px solid;border-color:#fff #404040 #404040 #fff;box-shadow:inset -1px -1px #808080;background:#d4d0c8;display:flex;align-items:center}
.start{width:52px;font-weight:700;padding-left:2px;gap:1px;font-size:11px}
.taskbar svg{width:16px;height:16px;flex:none}
.quick{display:flex;gap:7px;margin-left:8px;width:93px}
.more{font-size:13px;font-weight:700;line-height:10px}
.quick .more{margin:0 4px 0 auto}
.tasks{display:flex;gap:3px;flex:1}
.tasks button{width:160px;padding:0 4px;gap:5px;white-space:nowrap;overflow:hidden}
.tasks .active{border-color:#404040 #fff #fff #404040;box-shadow:inset 1px 1px #808080;background:repeating-conic-gradient(#fff 0 25%,#d4d0c8 0 50%) 0 0/2px 2px;font-weight:700}
.lang{font-size:12px;margin-right:6px}
.tray{display:flex;align-items:center;gap:2px;height:24px;padding:0 9px 0 6px;border:1px solid;border-color:#808080 #fff #fff #808080}
.tray .more{margin-right:3px}
.tray .gap{margin-left:10px}
.tray time{margin-left:8px;font-size:12px}
```
